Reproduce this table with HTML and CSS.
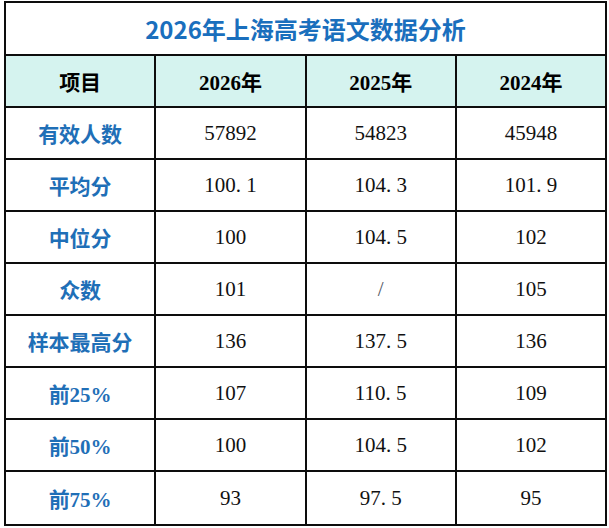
FILE: index.html
```html
<!DOCTYPE html>
<html lang="zh-CN">
<head>
<meta charset="utf-8">
<title>2026年上海高考语文数据分析</title>
<link rel="stylesheet" href="styles.css">
</head>
<body>
<table class="grid">
  <tr class="title-row"><td colspan="4" class="title">2026年上海高考语文数据分析</td></tr>
  <tr class="head-row">
    <th>项目</th><th>2026年</th><th>2025年</th><th>2024年</th>
  </tr>
  <tr><td class="label">有效人数</td><td>57892</td><td>54823</td><td>45948</td></tr>
  <tr><td class="label">平均分</td><td>100<span class="pt">.</span>1</td><td>104<span class="pt">.</span>3</td><td>101<span class="pt">.</span>9</td></tr>
  <tr><td class="label">中位分</td><td>100</td><td>104<span class="pt">.</span>5</td><td>102</td></tr>
  <tr><td class="label">众数</td><td>101</td><td class="slash">/</td><td>105</td></tr>
  <tr><td class="label">样本最高分</td><td>136</td><td>137<span class="pt">.</span>5</td><td>136</td></tr>
  <tr><td class="label">前25%</td><td>107</td><td>110<span class="pt">.</span>5</td><td>109</td></tr>
  <tr><td class="label">前50%</td><td>100</td><td>104<span class="pt">.</span>5</td><td>102</td></tr>
  <tr><td class="label">前75%</td><td>93</td><td>97<span class="pt">.</span>5</td><td>95</td></tr>
</table>
</body>
</html>
```
FILE: styles.css
```css
html, body {
  margin: 0;
  padding: 0;
  background: #ffffff;
}
body {
  padding: 1px 0 0 4px;
}
.grid {
  border-collapse: collapse;
  width: 603px;
  table-layout: fixed;
  font-family: "Liberation Serif", "Noto Sans CJK SC", serif;
  font-size: 21px;
  color: #111;
}
.grid td, .grid th {
  border: 2px solid #0d0d0d;
  text-align: center;
  vertical-align: middle;
  padding: 0;
  height: 50px;
}
.grid tr:last-child td {
  height: 52px;
}
.title-row td {
  height: 51px;
}
.title {
  font-family: "Noto Sans CJK SC", "Noto Sans", sans-serif;
  font-weight: 700;
  font-size: 24px;
  color: #1a6fbd;
  background: #ffffff;
}
.head-row th {
  background: #d5f3ef;
  font-family: "Liberation Serif", "Noto Sans CJK SC", serif;
  font-weight: 700;
  color: #000;
}
.label {
  color: #1f6fb7;
  font-weight: 700;
}
.pt {
  display: inline-block;
  width: 0.5em;
  text-align: left;
}
.slash {
  color: #555a66;
}
```
